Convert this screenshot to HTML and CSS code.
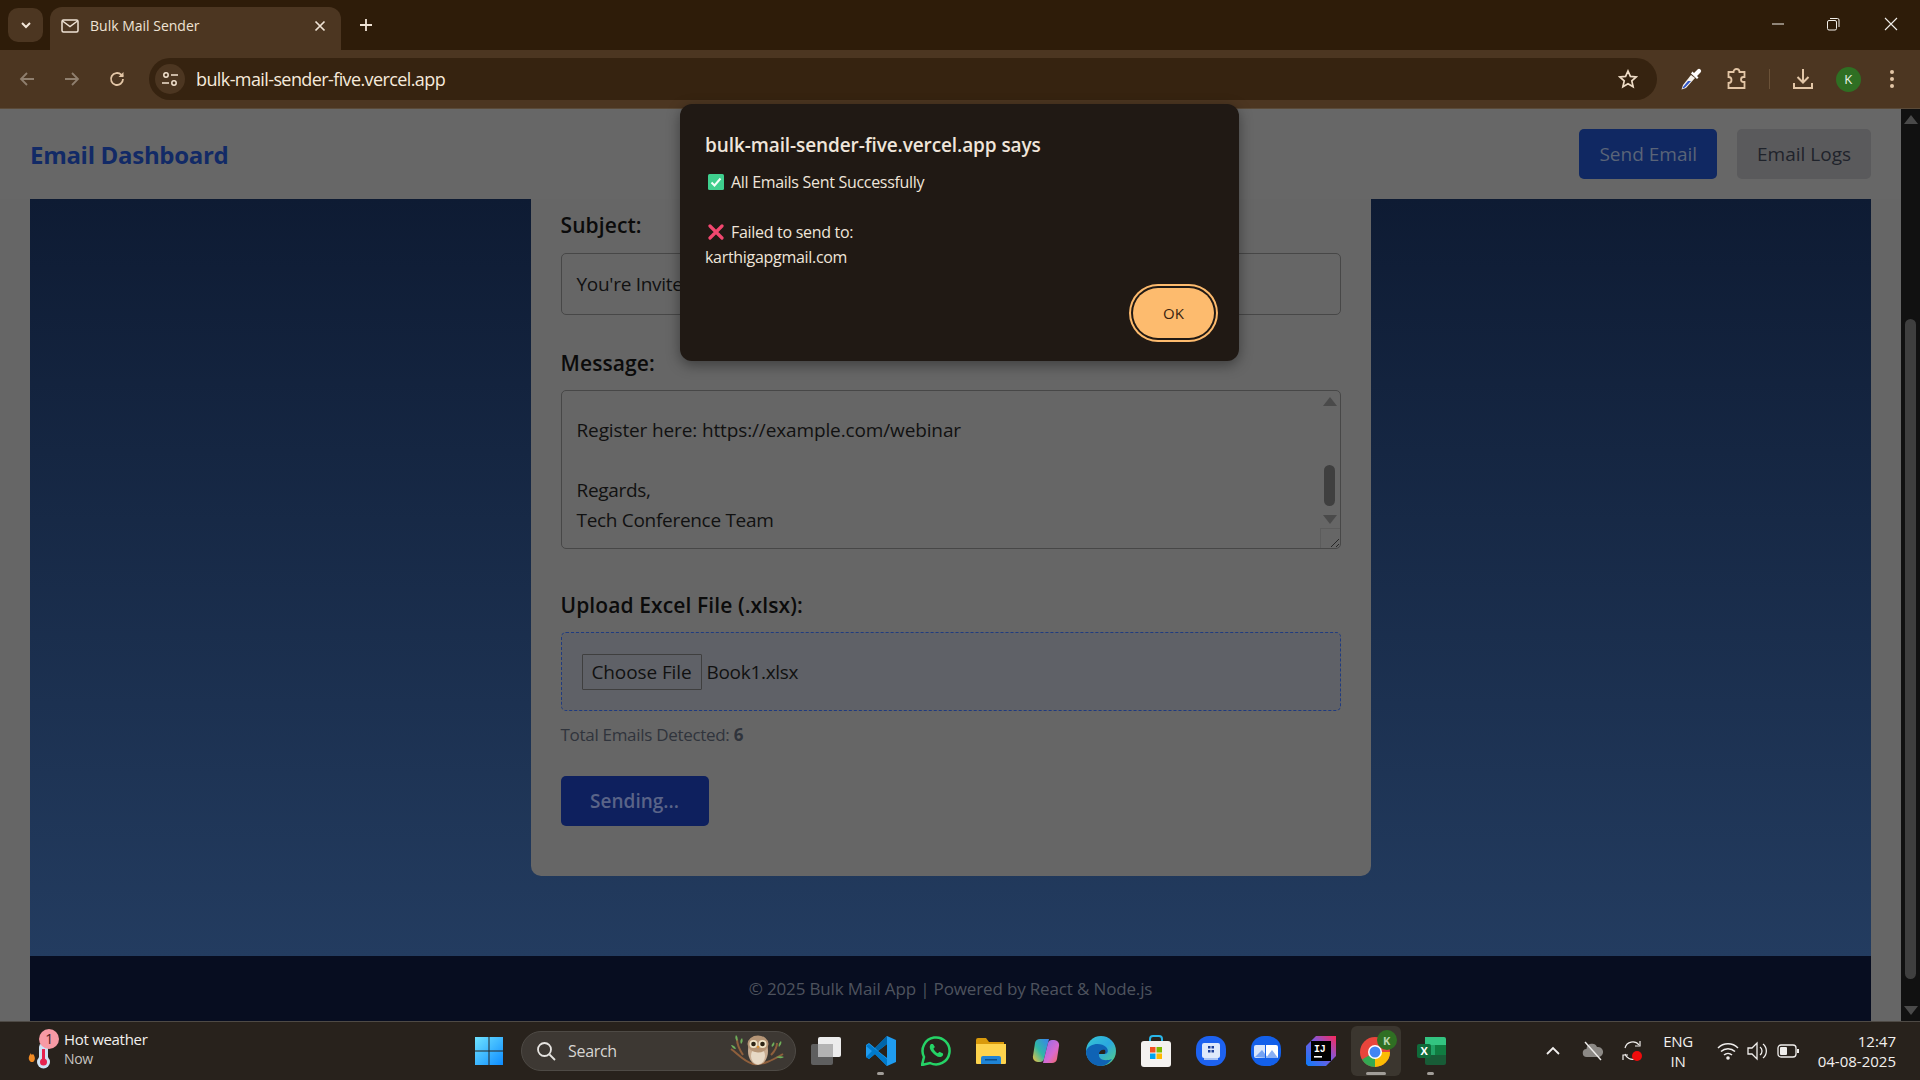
FILE: index.html
```html
<!DOCTYPE html>
<html lang="en">
<head>
<meta charset="UTF-8" />
<title>Bulk Mail Sender</title>
<link rel="stylesheet" href="styles.css">
</head>
<body>

<!-- browser frame -->
<div class="tabbar">
  <div class="tab-search"><svg width="14" height="14" viewBox="0 0 14 14"><path d="M3 5l4 4 4-4" fill="none" stroke="#f3e6d8" stroke-width="2"/></svg></div>
  <div class="tab">
    <svg class="tab-icon" width="18" height="14" viewBox="0 0 18 14"><rect x="1" y="1" width="16" height="12" rx="1.5" fill="none" stroke="#efe3d5" stroke-width="1.5"/><path d="M1.5 2l7.5 5.5L16.500 2" fill="none" stroke="#efe3d5" stroke-width="1.500"/></svg>
    <span class="tab-title">Bulk Mail Sender</span>
    <svg width="12" height="12" viewBox="0 0 12 12"><path d="M1.500 1.500l9 9M10.500 1.500l-9 9" stroke="#efe3d5" stroke-width="1.700"/></svg>
  </div>
  <svg class="tab-plus" width="14" height="14" viewBox="0 0 14 14"><path d="M7 1v12M1 7h12" stroke="#efe3d5" stroke-width="1.800"/></svg>
  <div class="window-btns">
    <svg width="14" height="14" viewBox="0 0 14 14"><path d="M1 7h12" stroke="#f1eee9" stroke-width="1"/></svg>
    <svg width="14" height="14" viewBox="0 0 14 14"><rect x="1.500" y="3.500" width="9" height="9.500" rx="1.500" fill="none" stroke="#f1eee9"/><path d="M4 1.500h7.500a1.500 1.500 0 0 1 1.500 1.500v7" fill="none" stroke="#f1eee9"/></svg>
    <svg class="window-close" width="14" height="14" viewBox="0 0 14 14"><path d="M1 1l12 12M13 1L1 13" stroke="#f1eee9" stroke-width="1.100"/></svg>
  </div>
</div>

<div class="toolbar">
  <div class="tool-btn"><svg width="18" height="18" viewBox="0 0 18 18"><path d="M16 9H3M9 3L3 9l6 6" fill="none" stroke="#8f7f6e" stroke-width="1.800"/></svg></div>
  <div class="tool-btn"><svg width="18" height="18" viewBox="0 0 18 18"><path d="M2 9h13M9 3l6 6-6 6" fill="none" stroke="#8f7f6e" stroke-width="1.800"/></svg></div>
  <div class="tool-btn"><svg width="18" height="18" viewBox="0 0 18 18"><path d="M15 9a6 6 0 1 1-1.800-4.300L15 6.500" fill="none" stroke="#e3c6a6" stroke-width="1.800"/><path d="M15.500 2v5h-5" fill="#e3c6a6"/></svg></div>

  <div class="omnibox">
    <div class="site-chip"><svg width="18" height="18" viewBox="0 0 18 18"><circle cx="5" cy="5" r="2.200" fill="none" stroke="#f2e2cf" stroke-width="1.500"/><path d="M10 5h7M1 13h7" stroke="#f2e2cf" stroke-width="1.600"/><circle cx="13" cy="13" r="2.200" fill="none" stroke="#f2e2cf" stroke-width="1.500"/></svg></div>
    <span class="url">bulk-mail-sender-five.vercel.app</span>
    <svg class="star" width="20" height="20" viewBox="0 0 20 20"><path d="M10 2l2.400 5.400 5.800.6-4.400 3.900 1.300 5.800L10 14.700l-5.100 3 1.300-5.800L1.800 8l5.800-.6z" fill="none" stroke="#efdcc6" stroke-width="1.700"/></svg>
  </div>

  <div class="tool-group">
    <div class="tool-btn"><svg width="22" height="24" viewBox="0 0 22 24"><path d="M11 8L3 18l-1.500 4.500L6 21l9-10z" fill="#f5f1ea"/><path d="M8 14l-5 6-.5 1.500L5 20.500l6-6.500z" fill="#2f55c8"/><path d="M11 6.500l6 5.500 1.500-1.500-1.500-1.500 3.500-3.500a2 2 0 0 0-3-3L14 6l-1.500-1.500z" fill="#fff"/></svg></div>
    <div class="tool-btn"><svg width="22" height="22" viewBox="0 0 22 22"><path d="M3 4h5a3 3 0 0 1 6 0h5v5h-1a2.500 2.500 0 0 0 0 5h1v6H3v-5a3 3 0 0 0 0-6z" transform="translate(-.5 0)" fill="none" stroke="#e3c6a6" stroke-width="1.800"/></svg></div>
    <div class="tool-divider"></div>
    <div class="tool-btn"><svg width="22" height="22" viewBox="0 0 22 22"><path d="M11 1v13M5.500 9l5.500 5.500L16.500 9" fill="none" stroke="#e3c6a6" stroke-width="2"/><path d="M2 15v5h18v-5" fill="none" stroke="#e3c6a6" stroke-width="2"/></svg></div>
    <div class="tool-btn avatar-btn"><span class="avatar">K</span></div>
    <div class="tool-btn menu-btn"><svg width="6" height="22" viewBox="0 0 6 22"><circle cx="3" cy="4" r="2" fill="#e3c6a6"/><circle cx="3" cy="11" r="2" fill="#e3c6a6"/><circle cx="3" cy="18" r="2" fill="#e3c6a6"/></svg></div>
  </div>
</div>

<!-- page, dimmed by the alert -->
<div class="page">
  <div class="content">
    <header class="topbar">
      <h1>Email Dashboard</h1>
      <nav>
        <a class="nav-active">Send Email</a>
        <a class="nav-idle">Email Logs</a>
      </nav>
    </header>

    <main>
      <form class="card">
        <label>Subject:</label>
        <div class="field">You're Invited to the Tech Conference</div>

        <label class="label-message">Message:</label>
        <div class="message">
          <div class="message-text">
            <p>Register here: https://example.com/webinar</p>
            <p class="regards">Regards,</p>
            <p>Tech Conference Team</p>
          </div>
          <div class="mini-scroll">
            <span class="arrow-up"></span>
            <span class="mini-thumb"></span>
            <span class="arrow-down"></span>
            <span class="grip"><svg width="10" height="10" viewBox="0 0 10 10"><path d="M1 9l8-8M6 9l3-3" stroke="#262626" stroke-width="1"/></svg></span>
          </div>
        </div>

        <label class="label-upload">Upload Excel File (.xlsx):</label>
        <div class="upload">
          <span class="file-btn">Choose File</span>
          <span>Book1.xlsx</span>
        </div>
        <p class="count">Total Emails Detected: <b>6</b></p>
        <button type="button" class="send-btn">Sending...</button>
      </form>
    </main>

    <footer>© 2025 Bulk Mail App | Powered by React &amp; Node.js</footer>
  </div>

  <div class="page-scroll">
    <span class="arrow-up"></span>
    <div class="page-track"><span class="page-thumb"></span></div>
    <span class="arrow-down"></span>
  </div>
</div>

<!-- taskbar -->
<div class="taskbar">
  <div class="weather">
    <svg class="weather-icon" width="36" height="42" viewBox="0 0 36 42">
      <path d="M5 33c-3-2-3-5 0-9 0 2 1 2 2 1 2 2 3 6 0 8z" fill="#f08a24"/>
      <rect x="13" y="14" width="9" height="20" rx="4.500" fill="#cfe3f6"/>
      <circle cx="17.500" cy="33" r="6.500" fill="#cfe3f6"/>
      <rect x="16" y="20" width="3" height="12" fill="#e5234f"/>
      <circle cx="17.500" cy="33" r="3.500" fill="#e5234f"/>
      <circle cx="23" cy="10" r="10" fill="#f79aa5"/>
      <text x="23" y="15" class="badge-num">1</text>
    </svg>
    <div class="weather-text">
      <span>Hot weather</span>
      <span class="weather-now">Now</span>
    </div>
  </div>

  <div class="task-icon">
    <svg width="30" height="30" viewBox="0 0 30 30"><defs><linearGradient id="win" x1="0" y1="0" x2="1" y2="1"><stop offset="0" stop-color="#6fe3ff"/><stop offset="1" stop-color="#0d8cff"/></linearGradient></defs><path d="M1 1h13.500v13.500H1zM15.500 1H29v13.500H15.500zM1 15.500h13.500V29H1zM15.500 15.500H29V29H15.500z" fill="url(#win)"/></svg>
  </div>

  <div class="search">
    <svg width="20" height="20" viewBox="0 0 20 20"><circle cx="8.500" cy="8.500" r="6.500" fill="none" stroke="#e6e4e1" stroke-width="1.800"/><path d="M13.500 13.500L19 19" stroke="#e6e4e1" stroke-width="1.800"/></svg>
    <span>Search</span>
    <svg class="owl" width="58" height="36" viewBox="0 0 58 36">
      <path d="M2 16c6 4 12 12 22 15 10 1 18-3 30-10M8 6c0 6 2 10 6 16M48 10c0 4-2 8-6 12" fill="none" stroke="#8f5f3c" stroke-width="2"/>
      <path d="M7 2c2 2 2 4 1 6-2-2-2-4-1-6zM13 5c1 2 1 4-1 6-1-2-1-4 1-6zM2 12c2 0 4 1 5 4-3 0-4-2-5-4zM52 8c1 2 0 4-2 6-1-2 0-4 2-6zM45 9c1 2 0 4-2 5-1-2 0-3 2-5zM47 24c3-1 6-1 8 0-3 2-6 1-8 0z" fill="#6fae5a"/>
      <ellipse cx="29" cy="18" rx="10" ry="14" fill="#c9ad92"/>
      <ellipse cx="29" cy="23" rx="7" ry="8.500" fill="#e7d9c6"/>
      <ellipse cx="29" cy="11" rx="10.500" ry="8.500" fill="#b59576"/>
      <circle cx="24.500" cy="11" r="4" fill="#f2e6c9"/><circle cx="33.500" cy="11" r="4" fill="#f2e6c9"/>
      <circle cx="24.500" cy="11" r="2.300" fill="#2c2415"/><circle cx="33.500" cy="11" r="2.300" fill="#2c2415"/>
      <path d="M27.500 13l1.500 3 1.500-3z" fill="#d9902f"/>
    </svg>
  </div>

  <div class="apps">
    <div class="task-icon"><svg width="32" height="30" viewBox="0 0 32 30"><rect x="1" y="8" width="22" height="21" rx="2" fill="#5f5f5f"/><rect x="8" y="1" width="23" height="20" rx="2" fill="#ececec"/><rect x="8" y="8" width="15" height="13" fill="#b3b3b3"/></svg></div>
    <div class="task-icon open">
      <svg width="30" height="30" viewBox="0 0 30 30"><path d="M21 0l9 4v22l-9 4-12-12-6 5-3-2v-12l3-2 6 5z" fill="#1f9cf0"/><path d="M21 8l-9 7 9 7z" fill="#28221c"/><path d="M21 0v8l-9 7-3-3z" fill="#0065a9"/><path d="M0 10l3-2 18 15v7L9 18l-6 5-3-2 6-6z" fill="#007acc"/></svg>
    </div>
    <div class="task-icon"><svg width="30" height="30" viewBox="0 0 30 30"><path d="M1 29l2-8a13.500 13.500 0 1 1 6 6z" fill="none" stroke="#25d366" stroke-width="2.500"/><path d="M10 8c-2 2-1.500 5 1 8s6 5.500 8.500 5c2-.4 3-2 2.500-3.500l-3.500-1.800-1.700 1.600c-2-1-3.600-2.800-4.400-4.600l1.500-1.700L12 8z" fill="#25d366"/></svg></div>
    <div class="task-icon"><svg width="30" height="26" viewBox="0 0 30 26"><path d="M0 2a2 2 0 0 1 2-2h8l3 4h15v6H0z" fill="#d99a0b"/><path d="M0 6h30v19a1 1 0 0 1-1 1H1a1 1 0 0 1-1-1z" fill="#fdd34d"/><path d="M5 26v-6a2 2 0 0 1 2-2h16a2 2 0 0 1 2 2v6z" fill="#1f84d6"/><rect x="9" y="21" width="12" height="1.500" fill="#0b4f8a"/></svg></div>
    <div class="task-icon"><svg width="28" height="28" viewBox="0 0 28 28"><defs><linearGradient id="cop" x1="0" y1="1" x2="1" y2="0"><stop offset="0" stop-color="#f5c13d"/><stop offset=".45" stop-color="#2fb8a6"/><stop offset="1" stop-color="#3a7ff0"/></linearGradient><linearGradient id="cop2" x1="0" y1="0" x2="1" y2="1"><stop offset="0" stop-color="#8a6cf0"/><stop offset=".6" stop-color="#d86ad0"/><stop offset="1" stop-color="#f4695a"/></linearGradient></defs><path d="M8 2h9l-5 20c-.5 2-2 3-4 3H6a5 5 0 0 1-5-6l2-13c.4-2.500 2.500-4 5-4z" fill="url(#cop)"/><path d="M20 26h-9l5-20c.5-2 2-3 4-3h2a5 5 0 0 1 5 6l-2 13c-.4 2.500-2.500 4-5 4z" fill="url(#cop2)"/></svg></div>
    <div class="task-icon"><svg width="30" height="30" viewBox="0 0 30 30"><defs><linearGradient id="edge" x1="0" y1="0" x2="1" y2="1"><stop offset="0" stop-color="#37c6d0"/><stop offset=".5" stop-color="#2aa8e0"/><stop offset="1" stop-color="#5ad07a"/></linearGradient></defs><circle cx="15" cy="15" r="15" fill="url(#edge)"/><path d="M0 15c3-8 15-9 20-4 3 3 2 7-1 7h-6c-1 5 5 8 13 5-3 4-7 7-11 7C7 30 0 24 0 15z" fill="#0f63b5"/><path d="M13 18c0-3 3-5 6-4 1 2 0 4-1 4z" fill="#28221c"/></svg></div>
    <div class="task-icon"><svg width="30" height="32" viewBox="0 0 30 32"><path d="M9 7V4a3 3 0 0 1 3-3h6a3 3 0 0 1 3 3v3" fill="none" stroke="#29b6e8" stroke-width="2"/><rect x="0" y="6" width="30" height="26" rx="3" fill="#f4f2f0"/><path d="M9 12h5.500v5.500H9z" fill="#f25022"/><path d="M15.500 12H21v5.500h-5.500z" fill="#7fba00"/><path d="M9 18.500h5.500V24H9z" fill="#00a4ef"/><path d="M15.500 18.500H21V24h-5.500z" fill="#ffb900"/></svg></div>
    <div class="task-icon"><svg width="30" height="30" viewBox="0 0 30 30"><rect width="30" height="30" rx="13" fill="#1d62f0"/><rect x="6" y="7" width="18" height="15" rx="2" fill="#dfe9fb"/><path d="M12 10h2.500v2.500H12zM15.500 10H18v2.500h-2.500zM12 14h2.500v2.500H12zM15.500 14H18v2.500h-2.500z" fill="#1d3f9a"/><rect x="8" y="22" width="14" height="2" fill="#a9c3f5"/></svg></div>
    <div class="task-icon"><svg width="30" height="30" viewBox="0 0 30 30"><rect width="30" height="30" rx="13" fill="#1360ea"/><path d="M3 11a2 2 0 0 1 2-2h9v13H5a2 2 0 0 1-2-2z" fill="#d9e6fb"/><path d="M15 9h10a2 2 0 0 1 2 2v11H15z" fill="#fff"/><path d="M4 21l7-7 6 8zM15 22l6-8 6 8z" fill="#1360ea" opacity=".5"/></svg></div>
    <div class="task-icon"><svg width="30" height="30" viewBox="0 0 30 30"><defs><linearGradient id="ij" x1="0" y1="1" x2="1" y2="0"><stop offset="0" stop-color="#087cfa"/><stop offset=".55" stop-color="#7c59e0"/><stop offset="1" stop-color="#fe2857"/></linearGradient></defs><path d="M0 28V10L10 0h20v20l-10 10H2z" fill="url(#ij)"/><rect x="5" y="5" width="20" height="20" fill="#000"/><text x="8" y="16" class="ij-text">IJ</text><rect x="8" y="20" width="8" height="1.600" fill="#fff"/></svg></div>
    <div class="task-icon chrome-slot">
      <svg width="32" height="32" viewBox="0 0 32 32"><circle cx="15" cy="17" r="15" fill="#e8453c"/><path d="M15 17L2 24.500A15 15 0 0 0 15 32z" fill="#34a853"/><path d="M15 17h15a15 15 0 0 1-15 15z" fill="#fbbc04"/><circle cx="15" cy="17" r="7" fill="#fff"/><circle cx="15" cy="17" r="5.500" fill="#4285f4"/></svg>
      <span class="chrome-badge">K</span>
    </div>
    <div class="task-icon open"><svg width="30" height="30" viewBox="0 0 30 30"><path d="M9 1h19a2 2 0 0 1 2 2v6H9z" fill="#33c481"/><path d="M9 9h10v10H9z" fill="#21a366"/><path d="M19 9h11v10H19z" fill="#107c41"/><path d="M9 19h21v8a2 2 0 0 1-2 2H11a2 2 0 0 1-2-2z" fill="#185c37"/><rect x="1" y="8" width="14" height="14" rx="2" fill="#0f6b3a"/><text x="8" y="19" class="xl-text">X</text></svg></div>
  </div>

  <div class="tray">
    <div class="tray-icon"><svg width="14" height="10" viewBox="0 0 14 10"><path d="M1 8l6-6 6 6" fill="none" stroke="#f2f0ee" stroke-width="1.800"/></svg></div>
    <div class="tray-icon"><svg width="22" height="22" viewBox="0 0 22 22"><path d="M5 17a4 4 0 0 1-.5-8A5.500 5.500 0 0 1 15 7a4.500 4.500 0 0 1 2 10z" fill="#8c8985"/><path d="M3 2l16 18" stroke="#f0eeec" stroke-width="1.400"/></svg></div>
    <div class="tray-icon"><svg width="22" height="22" viewBox="0 0 22 22"><path d="M3 8a8 8 0 0 1 14-3M13 19a8 8 0 0 1-10-5" fill="none" stroke="#f0eeec" stroke-width="1.200"/><path d="M18 1v5h-5M1 20v-5h5" fill="none" stroke="#f0eeec" stroke-width="1.200"/><circle cx="15" cy="16" r="5" fill="#f00c0c"/></svg></div>
    <div class="lang"><span>ENG</span><span>IN</span></div>
    <div class="tray-small"><svg width="22" height="20" viewBox="0 0 22 20"><path d="M1 7a14 14 0 0 1 20 0M4 10.500a10 10 0 0 1 14 0M7 14a6 6 0 0 1 8 0" fill="none" stroke="#f0eeec" stroke-width="1.500"/><circle cx="11" cy="17" r="1.800" fill="#f0eeec"/></svg></div>
    <div class="tray-small"><svg width="22" height="20" viewBox="0 0 22 20"><path d="M1 7h4l5-5v16l-5-5H1z" fill="none" stroke="#f0eeec" stroke-width="1.300"/><path d="M13 6a5 5 0 0 1 0 8M16 3a9 9 0 0 1 0 14" fill="none" stroke="#f0eeec" stroke-width="1.300"/></svg></div>
    <div class="tray-small"><svg width="22" height="14" viewBox="0 0 22 14"><rect x="1" y="1" width="18" height="12" rx="3" fill="none" stroke="#f0eeec" stroke-width="1.300"/><rect x="3" y="3" width="7" height="8" rx="1" fill="#f0eeec"/><rect x="20" y="5" width="2" height="4" fill="#f0eeec"/></svg></div>
    <div class="clock"><span>12:47</span><span>04-08-2025</span></div>
  </div>
</div>

<!-- alert box -->
<div class="alert" role="alertdialog">
  <h2>bulk-mail-sender-five.vercel.app says</h2>
  <p class="alert-line"><svg width="16" height="16" viewBox="0 0 16 16"><rect width="16" height="16" rx="1.500" fill="#3fcf8e"/><path d="M3.500 8.500l3 3 6-7" fill="none" stroke="#f2fff8" stroke-width="2"/></svg>All Emails Sent Successfully</p>
  <p class="alert-line alert-fail"><svg width="16" height="16" viewBox="0 0 16 16"><path d="M2 2l12 12M14 2L2 14" stroke="#f2476f" stroke-width="3.200" stroke-linecap="round"/></svg>Failed to send to:</p>
  <p class="alert-mail">karthigapgmail.com</p>
  <div class="alert-actions"><button type="button" class="ok-btn">OK</button></div>
</div>

</body>
</html>
```

FILE: styles.css
```css
* { box-sizing: border-box; }
html, body { height: 100%; }
body {
  margin: 0;
  position: relative;
  display: flex;
  flex-direction: column;
  height: 1080px;
  overflow: hidden;
  background: #666;
  font-family: "Open Sans", "Noto Sans", sans-serif;
  letter-spacing: -0.3px;
  color: #111;
}

/* tab strip */
.tabbar {
  height: 50px;
  display: flex;
  align-items: flex-start;
  background: #2e1c09;
  flex: none;
}
.tab-search {
  width: 35px;
  height: 34px;
  margin: 8px 7px 0 8px;
  border-radius: 10px;
  background: #4c3621;
  display: flex;
  align-items: center;
  justify-content: center;
}
.tab {
  width: 291px;
  height: 43px;
  margin-top: 7px;
  padding: 0 15px 6px 11px;
  border-radius: 12px 12px 0 0;
  background: #4c3621;
  display: flex;
  align-items: center;
  color: #efe3d5;
  font-size: 14px;
  letter-spacing: 0;
}
.tab-icon { margin-right: 11px; }
.tab-title { flex: 1; }
.tab-plus { margin: 18px 0 0 18px; }
.window-btns {
  margin-left: auto;
  margin-top: 17px;
  padding-right: 22px;
  display: flex;
  gap: 41px;
}
.window-close { margin-left: 3px; }

/* address bar */
.toolbar {
  height: 59px;
  flex: none;
  padding: 0 9px 0 8px;
  background: #4c3621;
  display: flex;
  align-items: center;
  gap: 7px;
  border-bottom: 1px solid #5a4a38;
}
.tool-btn {
  width: 38px;
  height: 38px;
  display: flex;
  align-items: center;
  justify-content: center;
  flex: none;
}
.omnibox {
  flex: 1;
  height: 42px;
  margin-left: 6px;
  padding: 0 19px 0 6px;
  border-radius: 21px;
  background: #362310;
  display: flex;
  align-items: center;
  color: #f6eadc;
  font-size: 18px;
  letter-spacing: -0.6px;
}
.site-chip {
  width: 30px;
  height: 30px;
  border-radius: 50%;
  background: #4c3621;
  display: flex;
  align-items: center;
  justify-content: center;
  margin-right: 11px;
}
.url { flex: 1; }
.tool-group {
  display: flex;
  align-items: center;
  gap: 8px;
  margin-left: 8px;
}
.tool-divider {
  width: 1px;
  height: 20px;
  margin: 0 6px 0 5px;
  background: #6b5238;
}
.avatar {
  width: 25px;
  height: 25px;
  border-radius: 50%;
  background: #2f6f23;
  color: #eaf3e6;
  font-size: 13px;
  display: flex;
  align-items: center;
  justify-content: center;
}
.avatar-btn { margin-left: -1px; }
.menu-btn { margin-left: -2px; }

/* dimmed page */
.page {
  flex: 1;
  min-height: 0;
  display: flex;
}
.content {
  flex: 1;
  display: flex;
  flex-direction: column;
  padding: 0 30px;
  min-width: 0;
}
.topbar {
  height: 90px;
  flex: none;
  margin: 0 -30px;
  padding: 0 30px;
  display: flex;
  align-items: center;
  justify-content: space-between;
  background: #676767;
}
.topbar h1 {
  margin: 0;
  font-size: 24px;
  font-weight: 700;
  color: #122a66;
}
.topbar nav { display: flex; gap: 20px; }
.topbar a {
  height: 50px;
  padding: 0 20px;
  border-radius: 5px;
  display: flex;
  align-items: center;
  font-size: 19px;
  letter-spacing: 0;
}
.nav-active { background: #102862; color: #5a6478; }
.nav-idle { background: #5a5a5c; color: #1f232b; }

main {
  flex: 1;
  min-height: 0;
  display: flex;
  justify-content: center;
  align-items: flex-start;
  background: linear-gradient(#0e1b33, #233c60);
}
.card {
  width: 840px;
  height: 677px;
  padding: 12px 30px 0;
  background: #666;
  border-radius: 0 0 10px 10px;
}
label {
  display: block;
  height: 28px;
  line-height: 28px;
  font-size: 21px;
  letter-spacing: 0.1px;
  font-weight: 600;
  color: #0b0b0b;
}
.field {
  height: 62px;
  margin-top: 14px;
  padding: 0 15px;
  border: 1px solid #474747;
  border-radius: 5px;
  display: flex;
  align-items: center;
  font-size: 19px;
}
.label-message { margin-top: 34px; }
.message {
  height: 159px;
  margin-top: 13px;
  padding-left: 15px;
  border: 1px solid #474747;
  border-radius: 5px;
  display: flex;
  font-size: 19px;
}
.message-text { flex: 1; padding-top: 24px; }
.message-text p { margin: 0; line-height: 30px; }
.message-text p:first-child { letter-spacing: -0.13px; }
.message-text .regards { margin-top: 30px; }
.mini-scroll {
  width: 20px;
  padding-top: 6px;
  display: flex;
  flex-direction: column;
  align-items: center;
}
.arrow-up, .arrow-down {
  width: 0;
  height: 0;
  border-left: 7px solid transparent;
  border-right: 7px solid transparent;
  flex: none;
}
.arrow-up { border-bottom: 9px solid #4a4a4a; }
.arrow-down { border-top: 9px solid #4a4a4a; }
.mini-thumb {
  width: 11px;
  height: 41px;
  margin: 59px 0 9px;
  border-radius: 6px;
  background: #3f3f3f;
}
.grip {
  margin-top: auto;
  width: 20px;
  height: 20px;
  border-left: 1px solid #5c5c5c;
  border-top: 1px solid #5c5c5c;
  display: flex;
  align-items: flex-end;
  justify-content: flex-end;
}
.label-upload { margin-top: 42px; }
.upload {
  height: 79px;
  margin-top: 13px;
  padding: 0 20px;
  border: 1px dashed #1f3b80;
  border-radius: 5px;
  background: #5f6167;
  display: flex;
  align-items: center;
  gap: 5px;
  font-size: 19px;
}
.file-btn {
  width: 120px;
  height: 36px;
  border: 1px solid #3f3f3f;
  border-radius: 1px;
  display: flex;
  align-items: center;
  justify-content: center;
  letter-spacing: -0.1px;
}
.count {
  margin: 13px 0 0;
  line-height: 22px;
  font-size: 17px;
  color: #30343c;
}
.send-btn {
  display: block;
  width: 148px;
  height: 50px;
  margin-top: 30px;
  border: none;
  border-radius: 5px;
  background: #0e205e;
  color: #5a6488;
  font-family: inherit;
  letter-spacing: 0;
  font-size: 19px;
  font-weight: 600;
}

footer {
  height: 65px;
  flex: none;
  display: flex;
  align-items: center;
  justify-content: center;
  background: #070d20;
  color: #4e535e;
  font-size: 17px;
  letter-spacing: -0.15px;
}

.page-scroll {
  width: 19px;
  flex: none;
  padding: 6px 0;
  background: #111;
  display: flex;
  flex-direction: column;
  align-items: center;
}
.page-track {
  flex: 1;
  width: 100%;
  padding-top: 195px;
  padding-bottom: 27px;
  display: flex;
  justify-content: center;
}
.page-thumb {
  width: 11px;
  height: 100%;
  border-radius: 6px;
  background: #3f3f3f;
}

/* windows taskbar */
.taskbar {
  height: 59px;
  flex: none;
  display: flex;
  align-items: center;
  background: #28221c;
  border-top: 1px solid #4e4a45;
  color: #f2f0ee;
}
.weather {
  width: 461px;
  flex: none;
  padding-left: 26px;
  display: flex;
  align-items: center;
}
.weather-icon { flex: none; margin-top: -2px; }
.badge-num { font: 14px "Open Sans", sans-serif; fill: #4a1b22; text-anchor: middle; }
.weather-text {
  margin: -4px 0 0 2px;
  display: flex;
  flex-direction: column;
  font-size: 15px;
  line-height: 20px;
}
.weather-now { color: #c7c4c0; font-size: 14px; }
.task-icon {
  width: 55px;
  height: 50px;
  flex: none;
  position: relative;
  display: flex;
  align-items: center;
  justify-content: center;
}
.task-icon.open::after {
  content: "";
  position: absolute;
  left: 24px;
  bottom: 1px;
  width: 7px;
  height: 3px;
  border-radius: 2px;
  background: #a19d98;
}
.search {
  width: 275px;
  height: 40px;
  margin-left: 5px;
  padding: 0 0 0 14px;
  border-radius: 20px;
  border: 1px solid #4e4a45;
  background: #3d3833;
  display: flex;
  align-items: center;
  gap: 12px;
  color: #d7d5d2;
  font-size: 16px;
}
.owl { margin-left: auto; margin-right: 8px; }
.apps { margin-left: 2px; display: flex; }
.ij-text { font: 700 10px "Liberation Mono", monospace; fill: #fff; }
.xl-text { font: 700 11px "Open Sans", sans-serif; fill: #fff; text-anchor: middle; }
.chrome-slot {
  background: #3b362f;
  border-radius: 6px;
  width: 50px;
  margin: 0 2.500px;
}
.chrome-slot::after {
  content: "";
  position: absolute;
  left: 15px;
  bottom: 1px;
  width: 20px;
  height: 3px;
  border-radius: 2px;
  background: #a19d98;
}
.chrome-badge {
  position: absolute;
  right: 4px;
  top: 4px;
  width: 20px;
  height: 20px;
  border-radius: 50%;
  background: #2f6f23;
  color: #b9d6ae;
  font-size: 11px;
  font-weight: 700;
  display: flex;
  align-items: center;
  justify-content: center;
}
.tray {
  margin-left: auto;
  padding-right: 24px;
  display: flex;
  align-items: center;
}
.tray-icon {
  width: 40px;
  display: flex;
  justify-content: center;
}
.lang {
  width: 64px;
  margin-left: -4px;
  padding-right: 6px;
  display: flex;
  flex-direction: column;
  align-items: center;
  font-size: 15px;
  line-height: 20px;
}
.tray-small {
  width: 30px;
  display: flex;
  justify-content: center;
}
.clock {
  width: 93px;
  display: flex;
  flex-direction: column;
  align-items: flex-end;
  font-size: 15px;
  line-height: 20px;
  letter-spacing: 0;
}

/* alert */
.alert {
  position: absolute;
  left: 680px;
  top: 104px;
  width: 559px;
  height: 257px;
  padding: 28px 25px 0;
  border-radius: 12px;
  background: #201914;
  box-shadow: 0 4px 14px rgba(0, 0, 0, 0.4);
  color: #efe5da;
}
.alert h2 {
  margin: 0;
  font-size: 19px;
  line-height: 26px;
  font-weight: 600;
  letter-spacing: -0.1px;
}
.alert-line {
  margin: 11px 0 0;
  display: flex;
  align-items: center;
  gap: 7px;
  font-size: 16px;
  line-height: 26px;
}
.alert-line svg { margin-left: 3px; }
.alert-fail { margin-top: 24px; }
.alert-mail {
  margin: -1px 0 0;
  font-size: 16px;
  line-height: 26px;
}
.alert-actions {
  margin-top: 18px;
  display: flex;
  justify-content: flex-end;
}
.ok-btn {
  width: 81px;
  height: 50px;
  border: none;
  border-radius: 25px;
  background: #fdbb6e;
  box-shadow: 0 0 0 2px #201914, 0 0 0 4px #fdbb6e;
  color: #3a2410;
  font-family: inherit;
  font-size: 15px;
  font-weight: 500;
}
```
